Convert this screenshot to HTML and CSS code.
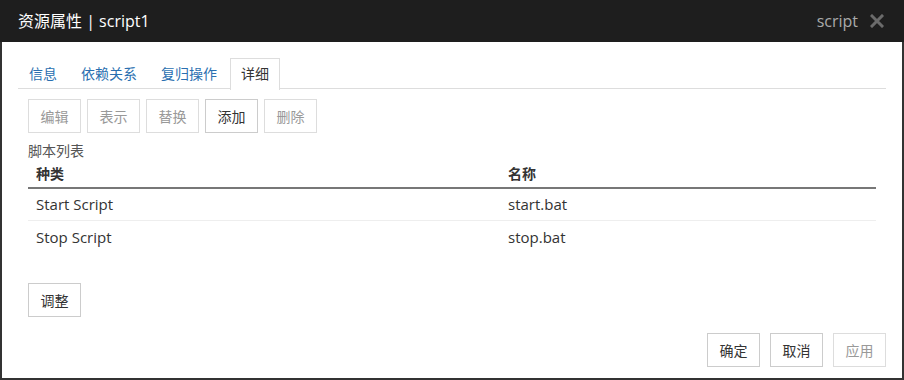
FILE: index.html
```html
<!DOCTYPE html>
<html lang="zh">
<head>
<meta charset="utf-8">
<link rel="stylesheet" href="styles.css">
</head>
<body>
<div class="dialog">
  <div class="header">
    <div class="title">资源属性 | script1</div>
    <div class="header-right">
      <span class="type">script</span>
      <svg class="close" width="14" height="14" viewBox="0 0 14 14"><path d="M2 2 L12 12 M12 2 L2 12" stroke="#6b6b6b" stroke-width="3" stroke-linecap="square"/></svg>
    </div>
  </div>
  <div class="body">
    <ul class="tabs">
      <li class="tab">信息</li>
      <li class="tab">依赖关系</li>
      <li class="tab">复归操作</li>
      <li class="tab active">详细</li>
    </ul>
    <div class="panel">
      <div class="toolbar">
        <button class="btn disabled">编辑</button>
        <button class="btn disabled">表示</button>
        <button class="btn disabled">替换</button>
        <button class="btn">添加</button>
        <button class="btn disabled">删除</button>
      </div>
      <div class="caption">脚本列表</div>
      <table class="list">
        <thead>
          <tr><th class="c1">种类</th><th>名称</th></tr>
        </thead>
        <tbody>
          <tr class="sep"><td>Start Script</td><td>start.bat</td></tr>
          <tr><td>Stop Script</td><td>stop.bat</td></tr>
        </tbody>
      </table>
      <div class="adjust"><button class="btn">调整</button></div>
    </div>
    <div class="footer">
      <button class="btn">确定</button>
      <button class="btn">取消</button>
      <button class="btn disabled">应用</button>
    </div>
  </div>
</div>
</body>
</html>
```
FILE: styles.css
```css
* { box-sizing: border-box; }
html, body { margin: 0; padding: 0; background: #fff; }
body {
  font-family: "Open Sans", "Noto Sans CJK SC", sans-serif;
  font-size: 14px;
  color: #333;
}
.dialog {
  width: 904px;
  height: 380px;
  border: 2px solid #333;
  border-top: none;
  display: flex;
  flex-direction: column;
}
.header {
  height: 42px;
  background: #1e1e1e;
  display: flex;
  align-items: center;
  justify-content: space-between;
  margin: 0 -2px;
  padding-left: 18px;
  padding-right: 20px;
}
.title {
  color: #fff;
  font-size: 16px;
  line-height: 20px;
}
.header-right {
  display: flex;
  align-items: center;
  gap: 12px;
}
.type {
  color: #aaa;
  font-size: 16px;
}
.close { display: block; }
.body {
  flex: 1;
  display: flex;
  flex-direction: column;
  padding: 16px 16px 0 16px;
}
.tabs {
  list-style: none;
  margin: 0;
  padding: 0;
  display: flex;
  border-bottom: 1px solid #ddd;
  height: 31px;
}
.tab {
  padding: 0 10px;
  margin-right: 2px;
  line-height: 30px;
  color: #2a6fb0;
  border: 1px solid transparent;
  border-bottom: none;
}
.tab.active {
  color: #333;
  border-color: #ddd;
  background: #fff;
  height: 32px;
}
.panel {
  padding: 10px 10px 0 10px;
}
.toolbar {
  display: flex;
  gap: 6px;
}
.btn {
  font-family: inherit;
  font-size: 14px;
  width: 53px;
  height: 34px;
  background: #fff;
  border: 1px solid #ccc;
  color: #333;
  padding: 0;
  border-radius: 0;
}
.btn.disabled {
  color: #999;
  border-color: #ddd;
}
.caption {
  margin-top: 10px;
  line-height: 16px;
  color: #555;
}
.list {
  width: 100%;
  border-collapse: collapse;
  margin-top: 4px;
}
.list th {
  text-align: left;
  font-weight: bold;
  padding: 0 8px;
  height: 25px;
  vertical-align: middle;
  border-bottom: 2px solid #777;
  line-height: 16px;
  padding-bottom: 3px;
}
.list th.c1 { width: 472px; }
.list td {
  padding: 0 8px;
  height: 33px;
  line-height: 16px;
  font-size: 15px;
}
.list tr.sep td { border-bottom: 1px solid #eee; height: 32px; }
.adjust {
  margin-top: 30px;
}
.footer {
  display: flex;
  justify-content: flex-end;
  gap: 10px;
  margin-top: 16px;
}
```
